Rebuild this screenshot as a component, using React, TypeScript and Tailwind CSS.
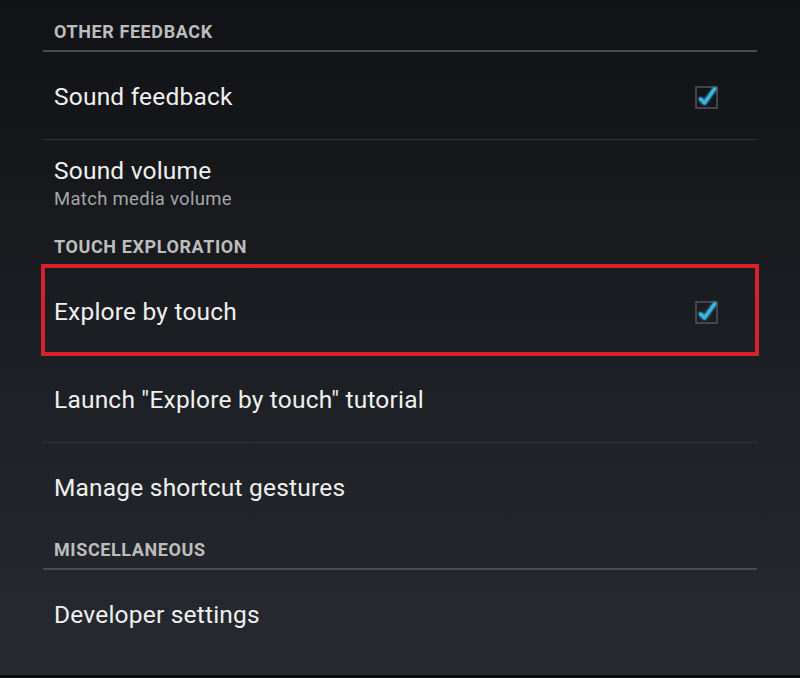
import React from "react";

function Check() {
  return (
    <svg width="30" height="30" viewBox="0 0 30 30" className="overflow-visible">
      <defs>
        <filter id="glow" x="-50%" y="-50%" width="200%" height="200%">
          <feGaussianBlur stdDeviation="1.6" result="b" />
          <feMerge>
            <feMergeNode in="b" />
            <feMergeNode in="SourceGraphic" />
          </feMerge>
        </filter>
      </defs>
      <rect x="5" y="6" width="21" height="21" fill="none" stroke="#4e5257" strokeWidth="1.6" />
      <path
        d="M9.5 18 L13.5 22 L23.5 8"
        fill="none"
        stroke="#3ab2e2"
        strokeWidth="3.4"
        strokeLinecap="round"
        strokeLinejoin="round"
        filter="url(#glow)"
      />
    </svg>
  );
}

function Header({ title }: { title: string }) {
  return (
    <div>
      <div className="h-[38px] flex items-end pb-[8px] pl-[11px]">
        <span className="text-[18px] leading-[20px] font-bold text-[#bdbdbd] tracking-[0.6px]">{title}</span>
      </div>
      <div className="h-[2px] bg-[#4a4c50]" />
    </div>
  );
}

function Row({
  title,
  sub,
  checked,
  divider = true,
  highlight = false,
}: {
  title: string;
  sub?: string;
  checked?: boolean;
  divider?: boolean;
  highlight?: boolean;
}) {
  return (
    <div className="relative">
      <div className="h-[87px] flex items-center justify-between pl-[11px] pr-[36px]">
        <div className={sub ? "flex flex-col" : "flex flex-col pt-[3px]"}>
          <span className="text-[24.5px] leading-[30px] text-[#f0f0f0] tracking-[0.2px]">{title}</span>
          {sub && <span className="text-[18.5px] leading-[26px] text-[#a4a6a9] tracking-[0.3px]">{sub}</span>}
        </div>
        {checked && <Check />}
      </div>
      {divider && <div className="h-px bg-[#303338]" />}
      {highlight && (
        <div className="absolute left-[-2px] right-[-2px] top-[-3px] bottom-[-1px] border-4 border-[#d6222b] pointer-events-none" />
      )}
    </div>
  );
}

export default function App() {
  return (
    <div
      className="w-[800px] h-[678px] overflow-hidden bg-gradient-to-b from-[#111215] to-[#272b31] flex flex-col"
      style={{ fontFamily: "Roboto, 'Noto Sans', sans-serif" }}
    >
      <div className="flex-1 px-[43px] pt-[12px]">
        <Header title="OTHER FEEDBACK" />
        <Row title="Sound feedback" checked />
        <Row title="Sound volume" sub="Match media volume" divider={false} />
        <Header title="TOUCH EXPLORATION" />
        <Row title="Explore by touch" checked highlight />
        <Row title={'Launch "Explore by touch" tutorial'} />
        <Row title="Manage shortcut gestures" divider={false} />
        <Header title="MISCELLANEOUS" />
        <Row title="Developer settings" divider={false} />
      </div>
      <div className="h-[3px] bg-[#0b0c0e]" />
    </div>
  );
}
